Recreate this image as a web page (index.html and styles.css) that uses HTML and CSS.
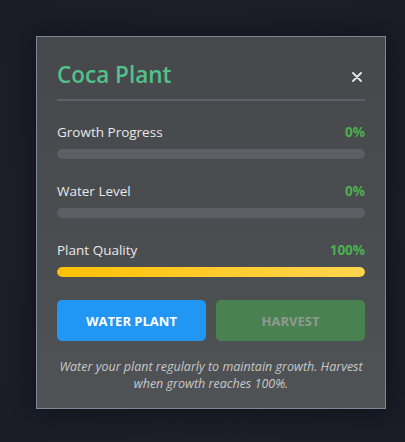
FILE: index.html
```html
<!DOCTYPE html>
<html lang="en">
<head>
<meta charset="utf-8">
<title>Coca Plant</title>
<link rel="stylesheet" href="styles.css">
</head>
<body>
  <div class="stage">
    <section class="panel">
      <header class="panel-header">
        <h1 class="panel-title">Coca Plant</h1>
        <button class="close-btn" aria-label="Close">
          <svg viewBox="0 0 10 10" width="10" height="10" aria-hidden="true">
            <path d="M1 1 L9 9 M9 1 L1 9" stroke="currentColor" stroke-width="1.9" stroke-linecap="round" fill="none"/>
          </svg>
        </button>
      </header>

      <div class="stat">
        <div class="stat-head">
          <span class="stat-label">Growth Progress</span>
          <span class="stat-value">0%</span>
        </div>
        <div class="bar"><div class="bar-fill" style="width:0%"></div></div>
      </div>

      <div class="stat">
        <div class="stat-head">
          <span class="stat-label">Water Level</span>
          <span class="stat-value">0%</span>
        </div>
        <div class="bar"><div class="bar-fill" style="width:0%"></div></div>
      </div>

      <div class="stat">
        <div class="stat-head">
          <span class="stat-label">Plant Quality</span>
          <span class="stat-value">100%</span>
        </div>
        <div class="bar"><div class="bar-fill bar-fill--quality" style="width:100%"></div></div>
      </div>

      <div class="actions">
        <button class="btn btn--water">WATER PLANT</button>
        <button class="btn btn--harvest" disabled>HARVEST</button>
      </div>

      <p class="hint">Water your plant regularly to maintain growth. Harvest when growth reaches 100%.</p>
    </section>
  </div>
</body>
</html>
```

FILE: styles.css
```css
* { box-sizing: border-box; }

html, body {
  margin: 0;
  height: 100%;
}

body {
  background: radial-gradient(ellipse at 50% 50%, #252833 0%, #1c1e28 60%, #1a1c26 100%);
  font-family: "Open Sans", "Noto Sans", sans-serif;
  color: #e6e6e6;
}

.stage {
  padding: 36px 0 0 36px;
}

.panel {
  width: 350px;
  padding: 22px 20px 16px;
  border: 1px solid #7d879a;
  background: linear-gradient(180deg, #46484c 0%, #4b4e51 60%, #4f5355 100%);
  box-shadow: 0 0 24px rgba(0, 0, 0, 0.45);
}

.panel-header {
  display: flex;
  align-items: center;
  justify-content: space-between;
  padding-bottom: 8px;
  border-bottom: 2px solid #5d6064;
  margin-bottom: 21px;
}

.panel-title {
  margin: 0;
  font-size: 22.5px;
  font-weight: 600;
  line-height: 32px;
  color: #52c189;
}

.close-btn {
  display: flex;
  border: 0;
  background: none;
  padding: 0;
  margin: 4px 3px 0 0;
  color: #e2e2e2;
  cursor: pointer;
}

.stat {
  margin-bottom: 22px;
}

.stat-head {
  display: flex;
  justify-content: space-between;
  align-items: center;
  line-height: 20px;
  margin-bottom: 7px;
}

.stat-label {
  font-size: 13.5px;
  color: #e8e8e8;
}

.stat-value {
  font-size: 13.5px;
  font-weight: 700;
  color: #4caf50;
}

.bar {
  height: 10px;
  border-radius: 5px;
  background: #5c5f63;
  overflow: hidden;
}

.bar-fill {
  height: 100%;
  border-radius: 5px;
}

.bar-fill--quality {
  background: linear-gradient(90deg, #ffc107 0%, #ffd54f 100%);
}

.actions {
  display: flex;
  gap: 10px;
  margin-top: 23px;
}

.stat + .actions { margin-top: 23px; }
.stat:last-of-type { margin-bottom: 0; }

.btn {
  flex: 1;
  height: 41px;
  border: 0;
  border-radius: 5px;
  font-family: inherit;
  font-size: 13px;
  font-weight: 700;
  cursor: pointer;
}

.btn--water {
  background: #2196f3;
  color: #ffffff;
}

.btn--harvest {
  background: #4a8150;
  color: #8f9a90;
  cursor: not-allowed;
}

.hint {
  margin: 17px 0 0;
  text-align: center;
  font-size: 12.5px;
  font-style: italic;
  line-height: 17px;
  color: #c8c8c8;
}
```
